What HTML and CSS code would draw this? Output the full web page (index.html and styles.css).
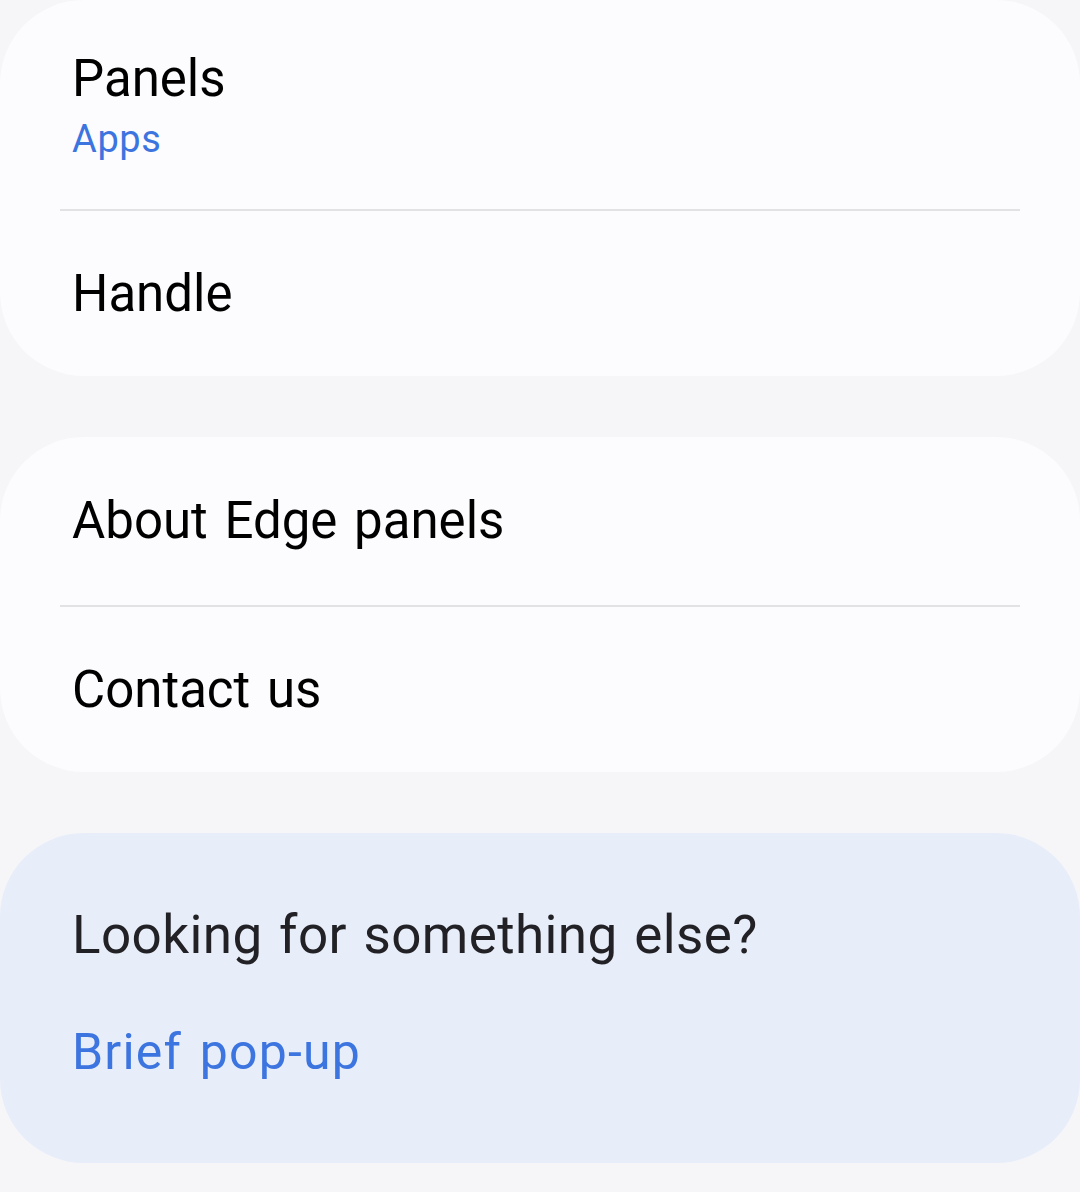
FILE: index.html
```html
<!DOCTYPE html>
<html>
<head>
<meta charset="utf-8">
<link rel="stylesheet" href="styles.css">
</head>
<body>
<div class="page">
  <section class="card">
    <div class="row row-tall">
      <div class="title">Panels</div>
      <div class="sub">Apps</div>
    </div>
    <div class="divider"></div>
    <div class="row row-short">
      <div class="title">Handle</div>
    </div>
  </section>
  <section class="card card-two">
    <div class="row row-a">
      <div class="title">About Edge panels</div>
    </div>
    <div class="divider"></div>
    <div class="row row-b">
      <div class="title">Contact us</div>
    </div>
  </section>
  <section class="card card-suggest">
    <div class="question">Looking for something else?</div>
    <div class="link">Brief pop-up</div>
  </section>
</div>
</body>
</html>
```
FILE: styles.css
```css
html, body {
  margin: 0;
  padding: 0;
  background: #f6f6f8;
}
body {
  font-family: Roboto, "Noto Sans", sans-serif;
  width: 1080px;
  height: 1192px;
  overflow: hidden;
}
.page {
  display: flex;
  flex-direction: column;
  gap: 61px;
}
.card {
  background: #fcfcfe;
  border-radius: 84px;
  display: flex;
  flex-direction: column;
}
.row {
  display: flex;
  flex-direction: column;
  justify-content: center;
  padding: 0 73px;
}
.row-tall {
  height: 209px;
  box-sizing: border-box;
  padding-top: 2px;
}
.row-short { height: 165px; }
.row-a { height: 168px; }
.row-b { height: 165px; }
.divider {
  height: 2px;
  background: #e2e2e5;
  margin: 0 60px;
}
.title {
  font-size: 51px;
  line-height: 60px;
  color: #000;
  word-spacing: 4px;
  margin-left: -1px;
}
.sub {
  font-size: 38px;
  line-height: 46px;
  margin-top: 7px;
  color: #3c74e0;
  letter-spacing: 0.6px;
  margin-left: -1px;
}
.card-suggest {
  background: #e7edf9;
  height: 330px;
  padding: 0 72px 12px;
  box-sizing: border-box;
  justify-content: center;
  gap: 55px;
}
.question {
  font-size: 53px;
  line-height: 64px;
  color: #222226;
  letter-spacing: 0.4px;
  word-spacing: 3px;
}
.link {
  font-size: 50px;
  line-height: 60px;
  color: #3c74e0;
  letter-spacing: 1.2px;
  word-spacing: 4px;
}
```
